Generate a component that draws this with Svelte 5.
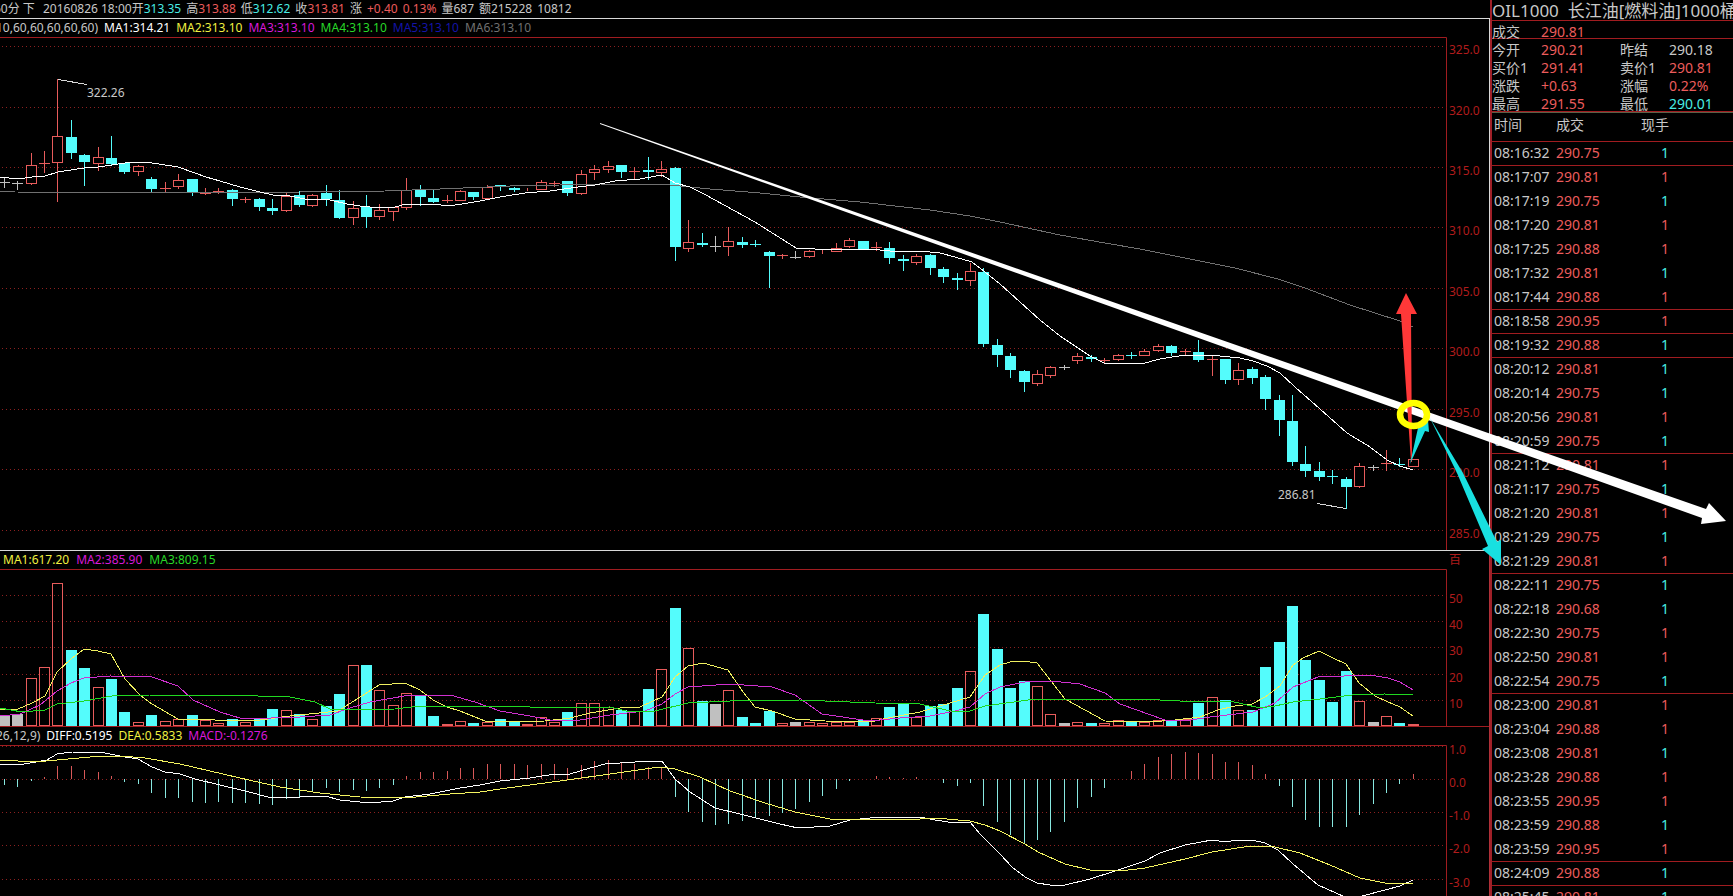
<script lang="ts">
  type Point = [number, string];

  // kind (r = up, c = down, g = flat), high, body top, body bottom, low, volume top, macd end
  const raw = `
g 177 182 182 187 715 785|g 181 183 183 189 714 787|r 153 165 183 184 678 781|r 151 163 163 172 667 777
r 79 136 162 201 583 766|c 120 137 153 158 650 766|c 154 155 162 185 668 770|r 147 157 163 170 687 772
c 136 158 164 165 679 776|c 163 163 172 173 712 782|r 165 166 171 175 722 784|c 177 179 189 192 715 793
r 182 188 189 192 721 798|r 174 180 186 188 719 798|c 179 179 193 195 715 802|r 188 193 193 194 720 803
r 188 191 192 193 723 802|c 189 190 199 205 719 803|r 197 199 200 202 722 803|c 198 199 207 210 718 804
c 199 208 211 214 709 805|r 192 196 210 211 710 799|c 191 195 205 206 714 797|r 194 195 205 206 719 791
c 185 193 199 205 706 788|c 190 200 218 218 694 792|r 201 208 217 224 665 790|c 195 207 217 227 665 791
r 204 210 216 219 690 788|r 207 207 211 220 705 785|r 178 190 207 209 693 776|c 185 189 197 205 696 772
c 190 198 202 202 716 772|r 195 200 201 202 724 771|r 190 191 200 200 721 768|c 192 192 197 199 723 768
r 185 187 198 198 722 764|c 185 185 187 190 719 764|c 187 188 190 191 721 764|r 188 188 189 190 724 765
r 180 182 189 189 717 764|r 181 183 183 186 722 764|c 181 181 193 195 712 768|r 170 174 193 194 703 765
r 165 169 172 179 703 761|r 161 166 169 172 707 760|c 165 165 172 177 710 762|r 167 171 171 179 711 764
c 157 170 172 179 689 767|r 161 169 172 176 669 768|c 167 168 247 260 608 797|r 220 242 248 251 648 812
c 233 243 245 246 701 822|g 236 246 246 251 704 825|r 227 241 246 255 690 824|c 237 242 245 247 717 821
c 240 244 245 246 723 817|c 251 252 256 287 711 816|r 254 255 256 258 723 813|g 251 257 257 258 722 809
r 250 251 256 257 722 802|r 250 250 250 253 723 796|r 243 248 251 251 722 789|r 238 240 246 247 722 781
c 241 241 249 249 720 779|r 242 247 247 250 718 776|c 242 248 258 263 707 777|c 255 259 261 270 704 778
r 254 256 262 264 717 777|c 254 255 268 274 706 779|c 267 269 277 282 704 783|c 273 278 280 289 688 786
r 263 271 280 285 671 783|c 268 272 344 346 614 806|c 339 345 355 366 649 822|c 353 356 370 377 688 835
c 370 371 382 391 681 843|r 370 374 383 385 686 840|r 366 367 375 377 714 832|g 365 367 367 369 723 822
r 353 356 360 363 722 808|c 355 357 359 361 723 797|r 358 360 360 362 723 788|r 354 355 359 360 720 779
c 352 355 356 358 721 771|r 349 351 355 355 722 764|r 344 346 350 351 720 757|c 345 346 353 355 720 754
r 349 351 352 355 719 752|c 340 352 360 361 703 753|r 356 359 360 375 697 754|c 359 359 380 383 700 762
r 363 370 379 384 710 762|c 367 369 378 383 710 765|c 375 377 399 409 667 774|c 395 400 420 435 642 786
c 395 421 462 465 606 807|c 446 464 471 476 660 820|c 462 471 477 480 680 827|c 470 476 477 483 702 827
c 477 479 487 508 671 827|r 463 466 486 487 701 815|g 465 467 467 470 722 804|r 450 463 464 470 716 793
c 458 464 465 466 723 784|r 459 459 466 466 724 774`;

  const bars = raw.trim().split(/[|\n]/).map((item, i) => {
    const [kind, ...n] = item.split(' ');
    const [high, top, bottom, low, vol, macd] = n.map(Number);
    return { kind, high, top, bottom, low, vol, macd, x: Math.floor(4.2 + i * 13.42) };
  });

  const colors: Record<string, string> = { r: '#e85c5c', c: '#54fcfc', g: '#c0c0c0' };

  const ma10 = '0,177 18,179 32,177 45,176 58,172 71,170 84,168 98,167 112,165 125,163 138,162 152,163 165,165 178,167 192,172 206,177 220,181 240,187 260,192 273,195 290,196 305,199 330,200 347,204 360,206 380,208 395,207 406,204 420,205 434,204 448,206 462,204 480,201 500,197 525,193 550,191 578,187 595,185 615,181 640,179 662,175 675,183 690,187 704,194 755,222 796,248 815,249 870,249 890,251 920,251 940,253 955,257 972,262 985,272 1000,284 1040,320 1060,336 1090,356 1104,363 1120,364 1145,363 1160,359 1185,355 1210,355 1240,358 1253,361 1267,366 1280,373 1295,387 1320,409 1347,433 1370,447 1387,460 1400,466 1413,470';
  const ma60 = '0,191 15,192 240,193 300,192 385,191 440,189 510,186 560,185 600,184 670,185 690,187 710,189 760,193 800,197 860,202 930,210 970,216 1000,222 1060,235 1105,243 1140,249 1180,257 1205,262 1235,268 1278,279 1305,288 1350,305 1400,321 1413,327';

  const volMa5 = '0,709 18,709 32,703 45,696 57,672 71,659 84,649 98,651 111,654 125,679 140,695 152,704 178,719 215,720 260,720 290,716 338,711 365,694 379,685 405,683 420,690 433,700 447,707 460,711 485,721 500,722 545,721 570,718 590,713 620,708 640,707 662,697 675,677 688,666 703,663 728,670 743,692 755,707 772,711 795,719 825,721 870,722 888,718 920,712 950,703 970,697 985,675 1000,665 1010,662 1023,661 1037,663 1051,681 1065,699 1105,721 1150,722 1175,720 1200,717 1218,710 1235,706 1252,704 1265,697 1280,686 1293,665 1303,658 1319,651 1333,658 1346,664 1359,683 1375,696 1388,702 1400,707 1413,716';
  const volMa10 = '0,716 20,714 40,705 57,691 71,683 84,678 110,676 152,677 178,686 193,700 220,712 243,719 300,717 330,715 350,708 370,702 410,695 450,695 475,702 500,711 530,716 555,721 580,720 610,715 645,711 662,704 675,694 688,687 730,684 772,687 795,695 822,714 870,721 900,718 930,716 955,711 970,707 985,694 1000,687 1030,681 1052,681 1080,684 1105,693 1120,704 1165,720 1185,721 1210,717 1253,712 1275,703 1293,687 1318,677 1370,675 1388,678 1400,682 1413,690';
  const volMa40 = '0,708 22,712 45,710 57,704 84,701 112,696 150,695 225,695 290,697 315,702 330,709 345,710 395,709 420,706 500,706 560,708 610,707 630,712 655,711 688,703 730,701 800,700 875,703 920,704 955,712 970,711 985,706 1035,699 1140,699 1180,701 1230,701 1260,708 1275,706 1293,702 1320,699 1352,695 1385,694 1413,695';

  const diff = '0,764 18,765 30,763 47,760 57,754 72,752 105,753 125,757 138,759 152,767 165,772 180,774 195,779 220,785 245,791 272,798 300,797 325,796 340,800 370,803 393,801 405,797 430,794 460,788 480,785 500,781 530,778 555,774 567,775 583,770 605,764 635,762 662,761 675,779 690,792 715,808 740,814 780,824 798,828 830,826 850,820 880,817 920,817 935,820 955,823 970,822 980,834 1000,854 1012,867 1025,877 1037,883 1050,885 1065,885 1090,879 1115,871 1145,861 1160,853 1185,845 1212,840 1225,842 1238,840 1252,840 1265,843 1278,850 1293,864 1318,885 1345,897 1362,896 1385,890 1400,886 1413,880';
  const dea = '0,760 35,762 57,760 90,757 120,756 145,758 180,764 210,771 240,778 280,787 320,793 360,797 405,798 450,794 480,792 500,789 560,781 610,774 645,769 660,767 675,769 700,777 730,791 765,803 795,812 830,819 920,819 935,818 970,821 985,825 1000,831 1025,844 1038,852 1065,864 1090,870 1120,871 1145,868 1185,859 1212,852 1250,846 1275,847 1300,853 1330,865 1360,878 1385,883 1413,883';

  const priceGrid: Point[] = [
    [46, '325.0'], [107, '320.0'], [167, '315.0'], [227, '310.0'], [288, '305.0'],
    [348, '300.0'], [409, '295.0'], [469, '290.0'], [530, '285.0']
  ];
  const volGrid: Point[] = [[595, '50'], [621, '40'], [647, '30'], [674, '20'], [700, '10']];
  const macdGrid: Point[] = [[746, '1.0'], [779, '0.0'], [812, '-1.0'], [845, '-2.0'], [879, '-3.0']];

  const quotes = [
    ['今开', '290.21', 'red', '昨结', '290.18', ''],
    ['买价1', '291.41', 'red', '卖价1', '290.81', 'red'],
    ['涨跌', '+0.63', 'red', '涨幅', '0.22%', 'red'],
    ['最高', '291.55', 'red', '最低', '290.01', 'cyan']
  ];

  const ticks = `16:32 75 c,17:07 81 r,17:19 75 c,17:20 81 r,17:25 88 r,17:32 81 c,17:44 88 r,18:58 95 r,19:32 88 c,20:12 81 c,20:14 75 c,20:56 81 r,20:59 75 c,21:12 81 r,21:17 75 c,21:20 81 r,21:29 75 c,21:29 81 r,22:11 75 c,22:18 68 c,22:30 75 r,22:50 81 r,22:54 75 c,23:00 81 r,23:04 88 r,23:08 81 c,23:28 88 r,23:55 95 r,23:59 88 c,23:59 95 r,24:09 88 c,25:45 81 c`
    .split(',')
    .map((t) => t.split(' '));

  // a rule closes each minute
  function lastOfMinute(i: number) {
    return i < ticks.length - 1 && ticks[i][0].slice(0, 2) !== ticks[i + 1][0].slice(0, 2);
  }
</script>

{#snippet grid(lines: Point[])}
  {#each lines as [y, label]}
    <line class="grid-line" x1="2" x2="1450" y1={y + 0.5} y2={y + 0.5} />
    <text class="axis-text" x="1449" y={y + 8}>{label}</text>
  {/each}
{/snippet}

<main class="terminal">
  <div class="charts">
    <div class="legend info">
      <span>60分 下&nbsp;</span>
      <span>20160826 18:00开<b class="cyan">313.35</b></span>
      <span>高<b class="red">313.88</b></span>
      <span>低<b class="cyan">312.62</b></span>
      <span>收<b class="red">313.81</b></span>
      <span>涨</span>
      <span class="red">+0.40</span>
      <span class="red">0.13%</span>
      <span>量687</span>
      <span>额215228</span>
      <span>10812</span>
    </div>

    <section class="panel price">
      <div class="legend cut">
        <span>10,60,60,60,60,60)</span>
        <span class="white">MA1:314.21</span>
        <span class="yellow">MA2:313.10</span>
        <span class="magenta">MA3:313.10</span>
        <span class="green">MA4:313.10</span>
        <span class="blue">MA5:313.10</span>
        <span class="gray">MA6:313.10</span>
      </div>
      <svg viewBox="0 37 1489 513" role="img" aria-label="K线">
        <path class="frame" d="M0 37.5H1446.5V550" />
        {@render grid(priceGrid)}
        {#each bars as b}
          <rect x={b.x} y={b.high} width="1" height={b.low - b.high + 1} fill={colors[b.kind]} />
          {#if b.kind === 'r' && b.bottom - b.top > 1}
            <rect x={b.x - 4.5} y={b.top + 0.5} width="10" height={b.bottom - b.top} fill="#000" stroke={colors.r} />
          {:else if b.high !== b.top || b.kind !== 'r'}
            <rect x={b.x - 5} y={b.top} width="11" height={Math.max(1, b.bottom - b.top)} fill={colors[b.kind]} />
          {/if}
        {/each}
        <polyline points={ma60} stroke="#707070" />
        <polyline points={ma10} stroke="#ffffff" />
        <path class="callout" d="M58 79.5L87 84.5M1317 503.5L1346 508.5" />
        <text class="note" x="87" y="97">322.26</text>
        <text class="note" x="1278" y="499">286.81</text>
      </svg>
    </section>

    <section class="panel volume">
      <div class="legend">
        <span class="yellow">MA1:617.20</span>
        <span class="magenta">MA2:385.90</span>
        <span class="green">MA3:809.15</span>
        <span class="unit">百</span>
      </div>
      <svg viewBox="0 569 1489 158" role="img" aria-label="成交量">
        <path class="frame" d="M0 569.5H1446.5V726M0 726.5H1489" />
        {@render grid(volGrid)}
        {#each bars as b}
          {#if b.kind === 'r' && b.vol < 724}
            <rect x={b.x - 4.5} y={b.vol + 0.5} width="10" height={725 - b.vol} fill="none" stroke={colors.r} />
          {:else}
            <rect x={b.x - 5} y={b.vol} width="11" height={726 - b.vol} fill={colors[b.kind]} />
          {/if}
        {/each}
        <polyline points={volMa5} stroke="#f0f060" />
        <polyline points={volMa10} stroke="#d030d0" />
        <polyline points={volMa40} stroke="#20d820" />
      </svg>
    </section>

    <section class="panel macd">
      <div class="legend cut">
        <span>26,12,9)</span>
        <span class="white">DIFF:0.5195</span>
        <span class="yellow">DEA:0.5833</span>
        <span class="magenta">MACD:-0.1276</span>
      </div>
      <svg viewBox="0 745 1489 151" role="img" aria-label="MACD">
        <path class="frame" d="M0 745.5H1446.5V896" />
        {@render grid(macdGrid)}
        {#each bars as b}
          <rect
            x={b.x}
            y={Math.min(b.macd, 779)}
            width="1"
            height={Math.abs(b.macd - 779)}
            fill={b.macd < 779 ? '#d85858' : '#88e8e0'}
          />
        {/each}
        <polyline points={diff} stroke="#ffffff" />
        <polyline points={dea} stroke="#f4f460" />
      </svg>
    </section>
  </div>

  <aside class="side">
    <h1>OIL1000&nbsp; 长江油[燃料油]1000桶</h1>
    <div class="quote last">
      <span>成交</span><span class="red">290.81</span>
    </div>
    <div class="quotes">
      {#each quotes as [l1, v1, c1, l2, v2, c2]}
        <div class="quote">
          <span>{l1}</span><span class={c1}>{v1}</span>
          <span>{l2}</span><span class={c2}>{v2}</span>
        </div>
      {/each}
    </div>
    <table>
      <thead>
        <tr><th class="time">时间</th><th class="deal">成交</th><th class="hand">现手</th><th></th></tr>
      </thead>
      <tbody>
        {#each ticks as [time, cents, kind], i}
          <tr class:ruled={lastOfMinute(i)}>
            <td>08:{time}</td>
            <td class="red">290.{cents}</td>
            <td class="hand {kind === 'c' ? 'cyan' : 'red'}">1</td>
            <td></td>
          </tr>
        {/each}
      </tbody>
    </table>
  </aside>

  <svg class="drawing" viewBox="0 0 1733 896" aria-hidden="true">
    <polygon points="600,123 1706,509 1709,503 1726,521 1701,524 1702,518 600,124" fill="#fff" />
    <polygon points="1406,293 1417,314 1411,314 1412,462 1411,462 1401,314 1396,314" fill="#ff3838" />
    <polygon points="1410,464 1418,428 1428,420 1429,432 1425,431" fill="#18e0e0" />
    <polygon points="1430,418 1463,473 1497,542 1501,540 1501,565 1482,549 1488,546 1457,473" fill="#18e0e0" />
    <ellipse cx="1413.5" cy="414.5" rx="13.5" ry="11.5" fill="none" stroke="#ffff00" stroke-width="6.5" />
  </svg>
</main>

<style>
  :global(body) {
    margin: 0;
    background: #000;
    overflow: hidden;
  }

  .terminal {
    position: relative;
    display: grid;
    grid-template-columns: minmax(0, 1fr) 243px;
    height: 100vh;
    overflow: hidden;
    background: #000;
    color: #c8c8c8;
    font-family: 'Noto Sans', 'Noto Sans CJK SC', sans-serif;
    font-size: 12px;
  }

  .charts {
    min-width: 0;
  }

  .legend {
    display: flex;
    gap: 7px;
    height: 18px;
    padding-left: 3px;
    line-height: 18px;
    white-space: nowrap;
    overflow: hidden;
  }

  .legend.info {
    gap: 5px;
    padding-left: 0;
    border-bottom: 1px solid #d8d8d8;
  }

  .info span:first-child {
    margin-left: -6px;
  }

  .legend.cut {
    gap: 6px;
    padding-left: 0;
  }

  .cut span:first-child {
    margin-left: -4px;
  }

  .legend b {
    font-weight: 400;
  }

  .unit {
    margin-left: auto;
    margin-right: 28px;
    color: #b01c1c;
  }

  .panel {
    border-right: 1px solid #b03038;
  }

  .price {
    border-right-color: #d8d8d8;
  }

  .volume {
    border-top: 1px solid #d8d8d8;
  }

  svg {
    display: block;
    width: 100%;
  }

  polyline,
  .callout {
    fill: none;
    stroke-width: 1;
    shape-rendering: crispEdges;
  }

  .callout {
    stroke: #d8d8d8;
  }

  .frame {
    fill: none;
    stroke: #a01c20;
  }

  .grid-line {
    stroke: #8c2020;
    stroke-dasharray: 1 3;
  }

  .axis-text {
    fill: #b01c1c;
    font-size: 12px;
  }

  .note {
    fill: #c8c8c8;
    font-size: 12px;
  }

  .side {
    min-width: 0;
    overflow: hidden;
    border-left: 2px solid #a02028;
    font-size: 14px;
  }

  h1 {
    height: 20px;
    margin: 0;
    border-bottom: 1px solid #a01c20;
    font-size: 17px;
    font-weight: 400;
    line-height: 21px;
    white-space: nowrap;
  }

  .quote {
    display: grid;
    grid-template-columns: 49px 79px 49px 1fr;
    height: 18px;
    line-height: 22px;
    white-space: nowrap;
  }

  .quote.last {
    height: 17px;
    border-bottom: 1px solid #a01c20;
  }

  .quotes {
    height: 71px;
    padding-bottom: 1px;
    border-bottom: 1px solid #a01c20;
  }

  table {
    width: 100%;
    table-layout: fixed;
    border-top: 1px solid #5c6048;
    border-spacing: 0;
  }

  th,
  td {
    box-sizing: border-box;
    height: 24px;
    padding: 0 0 2px 2px;
    border-bottom: 1px solid transparent;
    font-weight: 400;
    line-height: 20px;
    text-align: left;
    white-space: nowrap;
  }

  th {
    height: 29px;
    padding-bottom: 4px;
    border-bottom-color: #a01c20;
  }

  .ruled td {
    border-bottom-color: #a01c20;
  }

  .time {
    width: 62px;
  }

  .deal {
    width: 60px;
  }

  .hand {
    width: 55px;
    text-align: right;
  }

  .drawing {
    position: absolute;
    top: 0;
    left: 0;
    pointer-events: none;
  }

  .white {
    color: #ffffff;
  }

  .red {
    color: #ec5c5c;
  }

  .cyan {
    color: #48ece4;
  }

  .yellow {
    color: #f0f040;
  }

  .magenta {
    color: #d818d8;
  }

  .green {
    color: #28d828;
  }

  .blue {
    color: #1414a8;
  }

  .gray {
    color: #707070;
  }
</style>
